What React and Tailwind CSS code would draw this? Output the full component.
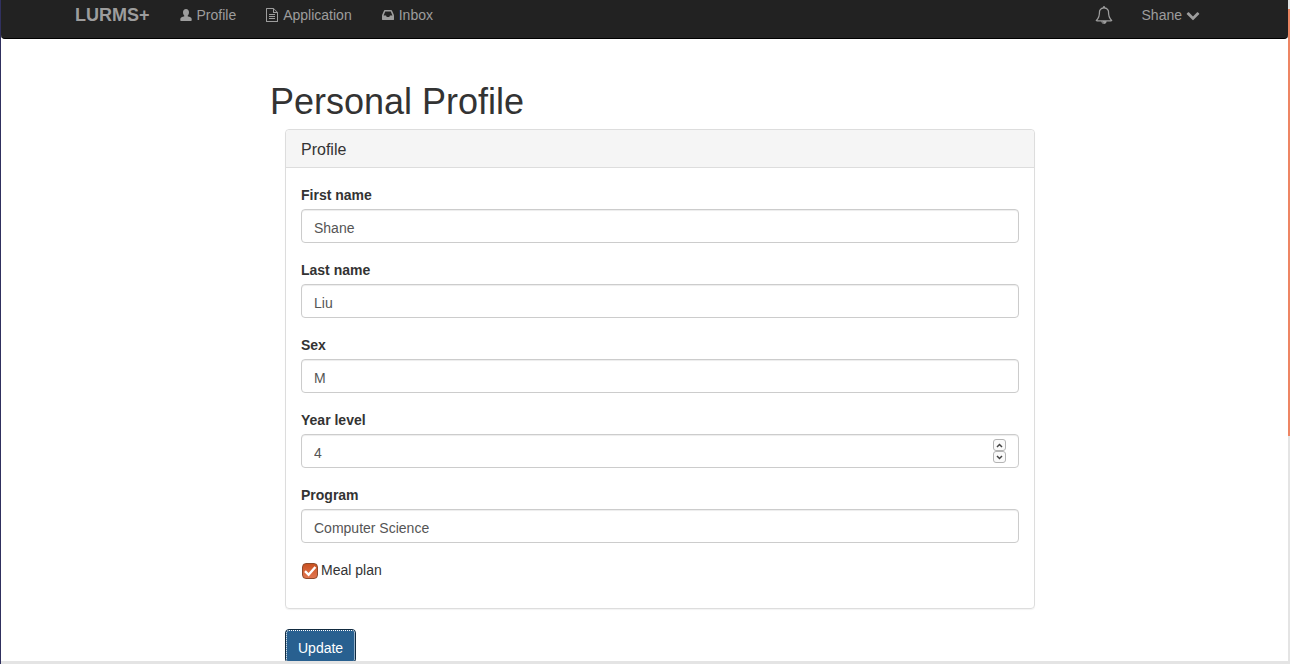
import React, { useState } from "react";

function Icon({ d, className, viewBox = "0 0 1792 1792" }) {
  return (
    <svg viewBox={viewBox} fill="currentColor" fillRule="evenodd" aria-hidden="true" className={`shrink-0 ${className}`}>
      <path d={d} />
    </svg>
  );
}

const USER =
  "M7 1C8.900 1 10 2.300 10 4.200 10 6 9.200 7.200 8.500 7.900 8.700 8.300 9.300 8.500 10.300 8.800 12 9.300 12.700 10 12.700 11.300V12.300Q12.700 13 12 13H2Q1.300 13 1.300 12.300V11.300C1.300 10 2 9.300 3.700 8.800 4.700 8.500 5.300 8.300 5.500 7.900 4.800 7.200 4 6 4 4.200 4 2.300 5.100 1 7 1z";
const FILE_TEXT =
  "M1.500 0H8.500L13 4.500V13.500Q13 14 12.500 14H1.500Q1 14 1 13.500V.500Q1 0 1.500 0zM2 1V13H12V5H8.500Q8 5 8 4.500V1zM9 1.500V4H11.500zM4 6H10V7H4zM4 8H10V9H4zM4 10H10V11H4z";
const INBOX =
  "M1151 960h316q-1-3-2.5-8.5t-2.5-7.5l-212-496h-708l-212 496q-1 3-2.5 8.500t-2.500 7.500h316l95 192h320zm513 30v482q0 26-19 45t-45 19h-1408q-26 0-45-19t-19-45v-482q0-62 25-123l238-552q10-25 36.500-42t52.500-17h832q26 0 52.500 17t36.500 42l238 552q25 61 25 123z";
const CHEVRON =
  "M1683 808l-742 741q-19 19-45 19t-45-19l-742-741q-19-19-19-45.500t19-45.500l166-165q19-19 45-19t45 19l531 531 531-531q19-19 45-19t45 19l166 165q19 19 19 45.500t-19 45.500z";
const BELL =
  "M912 1696q0-16-16-16-59 0-101.500-42.500t-42.500-101.500q0-16-16-16t-16 16q0 73 51.500 124.500t124.500 51.500q16 0 16-16zm-666-288h1300q-266-300-266-832 0-51-24-105t-69-103-121.500-80.500-169.500-31.500-169.500 31.500-121.500 80.500-69 103-24 105q0 532-266 832zm1482 0q0 52-38 90t-90 38h-448q0 106-75 181t-181 75-181-75-75-181h-448q-52 0-90-38t-38-90q50-42 91-88t85-119.500 74.500-158.500 50-206 19.500-260q0-152 117-282.500t307-158.500q-8-19-8-39 0-40 28-68t68-28 68 28 28 68q0 20-8 39 190 28 307 158.500t117 282.500q0 139 19.500 260t50 206 74.500 158.500 85 119.500 91 88z";

const inputClass =
  "block h-[34px] w-full rounded border border-[#ccc] bg-white px-3 pt-2 pb-1 text-sm text-[#555] shadow-[inset_0_1px_1px_rgba(0,0,0,0.075)] outline-none focus:border-[#66afe9] [appearance:textfield] [&::-webkit-inner-spin-button]:appearance-none [&::-webkit-outer-spin-button]:appearance-none";

function Field({ id, label, children, ...props }) {
  return (
    <div className="mb-[15px]">
      <label htmlFor={id} className="mb-1 block pt-0.5 text-sm leading-5 font-bold">
        {label}
      </label>
      <div className="relative">
        <input id={id} name={id} className={inputClass} {...props} />
        {children}
      </div>
    </div>
  );
}

function StepButton({ label, points, onClick }) {
  return (
    <button
      type="button"
      aria-label={label}
      onClick={onClick}
      className="flex h-3 w-[13px] items-center justify-center rounded-[3px] border border-[#b4b4b4] bg-[#fafafa]"
    >
      <svg viewBox="0 0 7 5" className="h-[5px] w-[7px]" fill="none" stroke="#444" strokeWidth="1.5">
        <polyline points={points} />
      </svg>
    </button>
  );
}

function NavLink({ icon, viewBox, children }) {
  return (
    <a href="#" className="flex items-center gap-1 hover:text-white">
      <Icon d={icon} viewBox={viewBox} className="size-3.5" />
      {children}
    </a>
  );
}

function Navbar() {
  return (
    <nav className="h-[39px] rounded-b border-b border-black bg-[#222] pl-px text-sm text-[#9d9d9d]">
      <div className="mx-auto flex h-[30px] max-w-[1170px] items-center gap-[29px] px-[15px]">
        <a href="#" className="text-lg font-bold hover:text-white">
          LURMS+
        </a>
        <NavLink icon={USER} viewBox="0 0 14 14">
          Profile
        </NavLink>
        <NavLink icon={FILE_TEXT} viewBox="0 0 14 14">
          Application
        </NavLink>
        <NavLink icon={INBOX}>Inbox</NavLink>
        <div className="ml-auto flex items-center gap-[29px] pr-[15px]">
          <button type="button" aria-label="Notifications" className="hover:text-white">
            <Icon d={BELL} className="size-[18px]" />
          </button>
          <button type="button" className="flex items-center gap-1 hover:text-white">
            Shane
            <Icon d={CHEVRON} className="size-3.5" />
          </button>
        </div>
      </div>
    </nav>
  );
}

export default function App() {
  const [year, setYear] = useState(4);
  return (
    <div className="flex h-screen flex-col border-l border-[#30305f] bg-white font-['Liberation_Sans',Arial,sans-serif] text-[#333]">
      <div className="flex min-h-0 flex-1">
        <div className="min-w-0 flex-1 overflow-y-auto [scrollbar-width:none]">
          <Navbar />
          <main className="pl-4">
            <div className="mx-auto max-w-[765px] pt-[43px]">
              <h1 className="mb-[7px] text-4xl leading-10 font-normal">Personal Profile</h1>
              <form className="pl-[15px]" onSubmit={(e) => e.preventDefault()}>
                <section className="mb-5 rounded border border-[#ddd] shadow-[0_1px_1px_rgba(0,0,0,0.05)]">
                  <h2 className="rounded-t border-b border-[#ddd] bg-[#f5f5f5] px-[15px] pt-2.5 pb-[7px] text-base leading-5 font-normal">
                    Profile
                  </h2>
                  <div className="px-[15px] pt-[15px] pb-[26px]">
                    <Field id="first-name" label="First name" type="text" defaultValue="Shane" />
                    <Field id="last-name" label="Last name" type="text" defaultValue="Liu" />
                    <Field id="sex" label="Sex" type="text" defaultValue="M" />
                    <Field
                      id="year-level"
                      label="Year level"
                      type="number"
                      value={year}
                      onChange={(e) => setYear(e.target.value)}
                    >
                      <div className="absolute inset-y-0 right-[13px] flex flex-col justify-center">
                        <StepButton
                          label="Increase year level"
                          points="1,4 3.5,1.5 6,4"
                          onClick={() => setYear(Number(year) + 1)}
                        />
                        <StepButton
                          label="Decrease year level"
                          points="1,1 3.5,3.5 6,1"
                          onClick={() => setYear(Number(year) - 1)}
                        />
                      </div>
                    </Field>
                    <Field id="program" label="Program" type="text" defaultValue="Computer Science" />
                    <label className="flex w-fit items-center gap-[3px] text-sm leading-6">
                      <span className="relative mt-0.5 ml-px size-4">
                        <input
                          type="checkbox"
                          name="meal-plan"
                          defaultChecked
                          className="peer block size-4 appearance-none rounded-[4px] border border-[#8f4a2c] bg-white checked:bg-linear-to-b checked:from-[#c9511f] checked:to-[#e2764f]"
                        />
                        <svg
                          viewBox="0 0 16 16"
                          className="pointer-events-none absolute inset-0 hidden size-4 peer-checked:block"
                          fill="none"
                          stroke="white"
                          strokeWidth="2.4"
                        >
                          <path d="M3 8.2 6.6 11.8 13.4 4" />
                        </svg>
                      </span>
                      Meal plan
                    </label>
                  </div>
                </section>
                <button
                  type="submit"
                  className="block h-[34px] rounded border border-[#122b40] bg-[#286090] px-3 pt-1 text-sm text-white outline-1 -outline-offset-2 outline-dotted outline-white"
                >
                  Update
                </button>
              </form>
            </div>
          </main>
        </div>
        <div className="w-0.5 shrink-0 bg-[#e4e4e4] pt-[9px]">
          <div className="h-[65.5%] bg-[#ee8664]" />
        </div>
      </div>
      <div className="h-[3px] shrink-0 bg-[#e4e4e4]" />
    </div>
  );
}
